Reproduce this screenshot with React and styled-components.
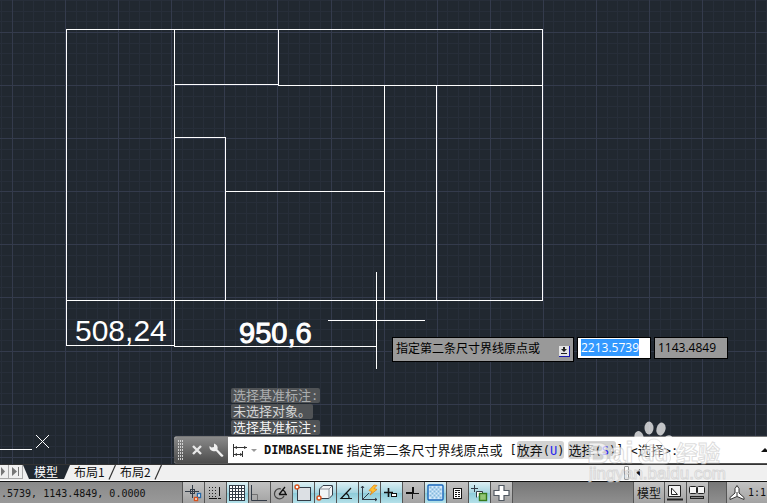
import React, { useEffect, useRef } from "react";
import styled, { createGlobalStyle, css } from "styled-components";

const cjk = `"Noto Sans CJK SC", sans-serif`;

const range = (n) => Array.from({ length: n }, (_, i) => i);

const GRID_STEP = 10.615;
const gridLines = (count, start) =>
  range(count).map((i) => ({ pos: Math.round(start + i * GRID_STEP) + 0.5, major: i % 5 === 0 }));

const columns = gridLines(250, -41);
const rows = gridLines(150, -21);

function Drawing() {
  return (
    <DrawingSvg aria-hidden="true">
      {[false, true].map((major) => (
        <g key={String(major)} stroke={major ? "#343b4c" : "#272e39"} shapeRendering="crispEdges">
          {columns.filter((l) => l.major === major).map((l) => (
            <line key={`c${l.pos}`} x1={l.pos} x2={l.pos} y1="0" y2="1600" />
          ))}
          {rows.filter((l) => l.major === major).map((l) => (
            <line key={`r${l.pos}`} y1={l.pos} y2={l.pos} x1="0" x2="2650" />
          ))}
        </g>
      ))}
      <g stroke="#fff" fill="none" shapeRendering="crispEdges">
        <path d="M66.5 345.5V29.5H542.5V300.5H66.5M174.5 29.5V346.5M278.5 29.5V85.5H542.5M174.5 84.5H278.5" />
        <path d="M174.5 137.5H225.5V300.5M225.5 191.5H384.5M384.5 85.5V300.5M436.5 85.5V300.5" />
        <path d="M66.5 345.5H174.5M174.5 346.5H376.5" />
        <path d="M376.5 272V369M328 320.5H425M0 449.5H32" />
      </g>
      <path d="M36 435L49 448M49 435L36 448" stroke="#fff" />
      <DimText x="75" y="341">508,24</DimText>
      <DimText x="239" y="343" $active>950,6</DimText>
    </DrawingSvg>
  );
}

function Watermark() {
  return (
    <WatermarkSvg viewBox="0 0 140 68" aria-hidden="true">
      <g fill="#fff" fillOpacity="0.72">
        <ellipse cx="53" cy="18" rx="4.5" ry="6" transform="rotate(-16 53 18)" />
        <ellipse cx="63" cy="9" rx="4.5" ry="6.5" />
        <ellipse cx="75" cy="10" rx="4.5" ry="6.5" transform="rotate(14 75 10)" />
        <ellipse cx="82" cy="22" rx="4.5" ry="6" transform="rotate(24 82 22)" />
        <path
          d="M68 20C61 20 60 27 56 31C51 36 52 45 59 45H78C86 45 86 36 81 31C76 27 75 20 68 20Z"
          fillOpacity="0.3"
          stroke="#ccc"
          strokeOpacity="0.5"
        />
      </g>
      <g fill="#fff" fillOpacity="0.7" stroke="#bbb" strokeOpacity="0.5">
        <MarkText x="1" y="44" $size={30} $bold>Bai</MarkText>
        <MarkText x="55" y="42" $size={22} $bold>du</MarkText>
        <MarkText x="90" y="42" $size={22} $bold>经验</MarkText>
        <MarkText x="3" y="60" $size={17}>jingyan.baidu.com</MarkText>
      </g>
    </WatermarkSvg>
  );
}

const orange = "#d9531e";

const icons = {
  infer: (
    <>
      <path d="M2 8.5H16M9.5 2V15" stroke="#333c47" />
      <rect x="7.5" y="6.5" width="4" height="4" stroke="#333c47" />
      <rect x="14.5" y="10.5" width="3" height="4" fill="#fff" stroke="#2869a8" strokeWidth="1.4" />
      <rect x="11.5" y="14.5" width="3" height="3" fill="#fff" stroke={orange} strokeWidth="1.4" />
    </>
  ),
  snap: (
    <>
      <path d="M4 4.5H13M4 7.5H13M4 10.5H13M4 13.5H13" stroke="#222" strokeDasharray="1 2" />
      <path d="M14.5 4V13M4 15.5H12M13 15.5H16" stroke="#111" />
    </>
  ),
  grid: (
    <>
      <rect x="2.5" y="2.5" width="15" height="15" fill="#fff" stroke="#333c47" />
      <path d="M5.5 2V18M8.5 2V18M11.5 2V18M14.5 2V18M2 5.5H18M2 8.5H18M2 11.5H18M2 14.5H18" stroke="#333c47" />
    </>
  ),
  ortho: (
    <>
      <path d="M2.5 2V17.5H18" stroke="#333c47" />
      <path d="M3 11.5H8.5V17" stroke="#727272" />
    </>
  ),
  polar: (
    <>
      <path d="M10 6A5 5 0 1 0 13 13" stroke="#444" strokeWidth="1.3" />
      <path d="M8 11.5H16M8 11.5L14 4M11.500 7Q14.500 8 14.500 11" stroke="#111" strokeWidth="1.3" />
    </>
  ),
  osnap: (
    <>
      <rect x="4.5" y="4.5" width="13" height="13" fill="#dce0e4" stroke="#333c47" />
      <circle cx="4" cy="4" r="2" fill="#fff" stroke={orange} strokeWidth="1.4" />
    </>
  ),
  osnap3d: (
    <>
      <path d="M4.5 6L8 2.5H17.5V12L14 15.5H4.5Z" fill="#f3f4f5" stroke="#333c47" />
      <path d="M4.5 6H14V15.5M14 6L17.5 2.5" stroke="#8b939b" />
      <circle cx="4" cy="15" r="2" fill="#fff" stroke={orange} strokeWidth="1.4" />
    </>
  ),
  otrack: <path d="M14 5L4 15.5H15M9 10Q12 12 12 15" stroke="#111" strokeWidth="1.2" />,
  ducs: (
    <>
      <path d="M3.5 17V3M2 5L3.5 3L5 5M4 16.5H18M16 15L18 16.5L16 18M4 16L10 10" stroke="#333c47" />
      <path d="M15 2L10 7.5L13 8.5L11 12L18 6.5L15 5.5L18 2.5Z" fill="#ffc22e" stroke="#e27a0c" strokeWidth="0.7" />
    </>
  ),
  dyn: (
    <>
      <path d="M3 9.5H12M7.5 5V14" stroke="#111" strokeWidth="1.6" />
      <rect x="10.5" y="10.5" width="5" height="3" fill="#fff" stroke="#111" />
    </>
  ),
  lwt: (
    <>
      <path d="M3 10H10M10 4V10" stroke="#111" strokeWidth="2" />
      <path d="M10 10.5H16M9.5 10V16" stroke="#111" />
    </>
  ),
  tpy: (
    <>
      <rect x="3" y="2" width="15" height="15" rx="1" fill="#d5eafb" stroke="#1765ba" strokeWidth="1.4" />
      {range(36).filter((i) => (i + Math.floor(i / 6)) % 2 === 0).map((i) => (
        <rect key={i} x={4.5 + (i % 6) * 2} y={3.5 + Math.floor(i / 6) * 2} width="2" height="2" fill="#84b9de" />
      ))}
    </>
  ),
  qp: (
    <>
      <rect x="6.5" y="5.5" width="8" height="10" fill="#fff" stroke="#111" />
      <path d="M8 7.5H13M8 9.5H10M8 11.5H10M8 13.5H10M11 9.5H13M11 11.5H13M11 13.5H13" stroke="#111" />
    </>
  ),
  sc: (
    <>
      <path d="M2 5.5H9M5.5 2V9" stroke="#333c47" />
      <path d="M7.5 14.5V8.5H13.5V10" fill="#fff" stroke="#333c47" />
      <rect x="10.5" y="10.5" width="7" height="7" fill="#92c574" stroke="#367b1c" strokeWidth="1.4" />
    </>
  ),
  plus: (
    <path d="M8 2.5H13V7.5H18V12.5H13V17.5H8V12.5H3V7.5H8Z" fill="#fff" stroke="#515962" strokeWidth="1.2" />
  ),
  layout: (
    <>
      <path d="M3.5 2.5H15.5V13.5H3.5Z" fill="#f1f1f1" stroke="#222" />
      <path d="M6.5 5V11.5H12.5Z" fill="#fff" stroke="#222" />
      <path d="M2 16.5H18" stroke="#222" strokeWidth="2" />
    </>
  ),
  quick: (
    <>
      <rect x="2.5" y="3.5" width="7" height="7" rx="1" fill="#f4f4f4" stroke="#222" />
      <rect x="10.5" y="3.5" width="7" height="7" rx="1" fill="#f4f4f4" stroke="#222" />
      <path d="M3 14.5H17" stroke="#222" strokeWidth="3" />
      <path d="M4 14.5H16" stroke="#888" />
    </>
  ),
  scale: (
    <path d="M10 2.5L12 5.5V10L17 14.5V16.5L10 13.5L3 16.5V14.5L8 10V5.5ZM10 9V13" fill="#fff" stroke="#333" />
  ),
};

const toggles = [
  ["infer", false, "推断约束"],
  ["snap", false, "捕捉模式"],
  ["grid", true, "栅格显示"],
  ["ortho", false, "正交模式"],
  ["polar", false, "极轴追踪"],
  ["osnap", true, "对象捕捉"],
  ["osnap3d", true, "三维对象捕捉"],
  ["otrack", true, "对象捕捉追踪"],
  ["ducs", true, "动态 UCS"],
  ["dyn", true, "动态输入"],
  ["lwt", false, "线宽"],
  ["tpy", true, "透明度"],
  ["qp", false, "快捷特性"],
  ["sc", true, "选择循环"],
  ["plus", false, "注释监视器"],
];

function Icon({ name }) {
  return (
    <svg width="21" height="20" fill="none" aria-hidden="true">
      {icons[name]}
    </svg>
  );
}

function DynamicInput() {
  const xRef = useRef(null);

  useEffect(() => {
    xRef.current.focus();
    xRef.current.select();
  }, []);

  return (
    <DynamicPrompt>
      <PromptTip>
        <span>指定第二条尺寸界线原点或</span>
        <OptionsButton aria-label="选项">
          <svg width="10" height="10" aria-hidden="true">
            <path d="M4 1H6V3H8L5 6L2 3H4ZM2 7H8V8H2Z" fill="#222" />
          </svg>
        </OptionsButton>
      </PromptTip>
      <CoordInput ref={xRef} aria-label="X" defaultValue="2213.5739" />
      <CoordInput aria-label="Y" defaultValue="1143.4849" $idle />
    </DynamicPrompt>
  );
}

function CommandLine() {
  return (
    <CommandDock>
      <History>
        <HistoryLine $fade={0.55}>选择基准标注<Mono>:</Mono></HistoryLine>
        <HistoryLine $fade={0.75}>未选择对象。</HistoryLine>
        <HistoryLine $fade={0.95}>选择基准标注<Mono>:</Mono></HistoryLine>
      </History>
      <CommandBar>
        <CommandHandle>
          <svg width="6" height="21" aria-hidden="true">
            {range(21).map((i) => (
              <rect key={i} x={(i % 3) * 2} y={Math.floor(i / 3) * 3} width="1" height="2" fill="#d0d0d0" />
            ))}
          </svg>
          <HandleButton aria-label="关闭">
            <svg width="10" height="10" aria-hidden="true">
              <path d="M1 1L9 9M9 1L1 9" stroke="#e8e8e8" strokeWidth="2.4" />
            </svg>
          </HandleButton>
          <HandleButton aria-label="自定义">
            <svg width="15" height="15" aria-hidden="true">
              <path
                d="M5 0.5L5 4L2.5 4.5L0.5 3Q0 7 3.5 8Q5.5 8.5 7 8L12 13.5Q14 14.5 14.5 12.5L8.500 6.5Q9.500 2 5 0.5Z"
                fill="#f0f0f0"
              />
            </svg>
          </HandleButton>
        </CommandHandle>
        <RecentButton aria-label="最近使用的命令">
          <svg width="25" height="17" fill="none" aria-hidden="true">
            <path d="M1.5 2V15M1 5.5H15M2 12.5H11M10.5 9V15" stroke="#333" />
            <path d="M2 5.5L5 4V7ZM15 5.5L12 4V7ZM2 12.5L5 11V14ZM11 12.5L8 11V14Z" fill="#333" />
            <path d="M19 7H25L22 10Z" fill="#999" />
          </svg>
        </RecentButton>
        <CommandName>DIMBASELINE</CommandName>
        <span>指定第二条尺寸界线原点或</span>
        <OptionGroup>
          <Mono>[</Mono>
          <Option>放弃<Mono>(<b>U</b>)</Mono></Option>
          <Option>选择<Mono>(<b>S</b>)</Mono></Option>
          <Mono>]</Mono>
        </OptionGroup>
        <span><Mono>&lt;</Mono>选择<Mono>&gt;:</Mono></span>
        <CommandInput aria-label="命令" />
        <HistoryToggle aria-label="历史记录">
          <svg width="6" height="4" aria-hidden="true">
            <path d="M0 4L4 0L8 4Z" fill="#111" />
          </svg>
        </HistoryToggle>
      </CommandBar>
    </CommandDock>
  );
}

function Slash() {
  return (
    <SlashSvg width="8" height="15" aria-hidden="true">
      <path d="M7.5 0L1 14.5" stroke="#333" strokeWidth="1.2" />
    </SlashSvg>
  );
}

function LayoutTabs() {
  return (
    <TabBar>
      <NavButton aria-label="下一个" $narrow>
        <svg width="6" height="9" aria-hidden="true"><path d="M0 0L4 4.5L0 9Z" fill="#777" /></svg>
      </NavButton>
      <NavButton aria-label="最后一个">
        <svg width="8" height="9" aria-hidden="true"><path d="M0 0L5 4.5L0 9ZM6 0H7V9H6Z" fill="#777" /></svg>
      </NavButton>
      <Tab $current>模型</Tab>
      <Tab>布局1<Slash /></Tab>
      <Tab>布局2<Slash /></Tab>
      <ScrollTrack>
        <Splitter />
        <svg width="5" height="7" aria-hidden="true"><path d="M4 0V7L0 3.5Z" fill="#111" /></svg>
      </ScrollTrack>
    </TabBar>
  );
}

function App() {
  return (
    <Screen>
      <GlobalStyle />
      <Workspace>
        <Drawing />
        <DynamicInput />
        <CommandLine />
      </Workspace>
      <LayoutTabs />
      <StatusBar>
        <Coordinates>.5739, 1143.4849, 0.0000</Coordinates>
        <ToggleGroup>
          {toggles.map(([name, on, label]) => (
            <StatusButton key={name} aria-label={label} aria-pressed={on} $on={on}>
              <Icon name={name} />
            </StatusButton>
          ))}
        </ToggleGroup>
        <StatusSpace />
        <StatusButton $wide>模型</StatusButton>
        <StatusButton aria-label="布局"><Icon name="layout" /></StatusButton>
        <StatusButton aria-label="快速查看"><Icon name="quick" /></StatusButton>
        <StatusGap />
        <ScaleButton><Icon name="scale" />1:1</ScaleButton>
      </StatusBar>
      <Watermark />
    </Screen>
  );
}

const GlobalStyle = createGlobalStyle`
  * {
    box-sizing: border-box;
  }

  body {
    margin: 0;
    overflow: hidden;
    font-family: ${cjk};
    font-size: 12px;
  }

  button,
  input {
    margin: 0;
    padding: 0;
    border: 0;
    border-radius: 0;
    background: none;
    color: inherit;
    font: inherit;
    outline: none;
  }

  svg {
    display: block;
    flex: none;
  }
`;

const Screen = styled.main`
  position: relative;
  display: flex;
  flex-direction: column;
  height: 100vh;
  overflow: hidden;
  background: #212830;
`;

const Workspace = styled.section`
  position: relative;
  flex: 1;
  min-height: 0;
  overflow: hidden;
`;

const DrawingSvg = styled.svg`
  width: 100%;
  height: 100%;
`;

const DimText = styled.text`
  fill: #fff;
  font-family: "Liberation Sans", Arial, sans-serif;
  font-size: 30px;
  ${({ $active }) => $active && css`
    font-size: 29px;
    stroke: #fff;
    stroke-width: 1px;
  `}
`;

const DynamicPrompt = styled.div`
  position: absolute;
  top: 337px;
  left: 392px;
  display: flex;
  align-items: flex-start;
  gap: 3px;
`;

const PromptTip = styled.div`
  display: flex;
  justify-content: space-between;
  width: 182px;
  height: 25px;
  padding: 0 3px;
  border: 1px solid #000;
  background: #999;
  color: #000;
  line-height: 20px;
`;

const OptionsButton = styled.button`
  align-self: flex-end;
  width: 11px;
  height: 11px;
  margin-bottom: 4px;
  border-right: 1px solid #1a1ab0;
  border-bottom: 1px solid #1a1ab0;
  background: #e4e4e4;
`;

const CoordInput = styled.input`
  width: 74px;
  height: 22px;
  padding: 0 3px 2px;
  border: 1px solid #000;
  background: ${({ $idle }) => ($idle ? "#999" : "#fff")};
  color: #000;
  font-family: "Open Sans", sans-serif;
  font-size: 12px;
  line-height: 17px;

  &::selection {
    background: #3399ff;
    color: #fff;
  }
`;

const CommandDock = styled.div`
  position: absolute;
  right: 0;
  bottom: 0;
  left: 174px;
`;

const History = styled.div`
  display: flex;
  flex-direction: column;
  align-items: flex-start;
  gap: 1px;
  padding: 0 0 1px 57px;
`;

const HistoryLine = styled.div`
  height: 15px;
  padding: 0 2px;
  border-radius: 2px;
  background: #505356;
  color: rgba(255, 255, 255, ${({ $fade }) => $fade});
  font-size: 13px;
  line-height: 14px;
`;

const CommandBar = styled.div`
  display: flex;
  align-items: center;
  height: 28px;
  border-top: 1px solid #777;
  border-bottom: 1px solid #555;
  border-radius: 3px 0 0 3px;
  background: #fff;
  color: #111;
  font-size: 13px;
  line-height: 18px;
  white-space: nowrap;
  overflow: hidden;
`;

const CommandHandle = styled.div`
  display: flex;
  align-items: center;
  justify-content: space-between;
  align-self: stretch;
  width: 54px;
  padding: 0 4px;
  background: linear-gradient(#8a8a8a, #4c4c4c);
`;

const HandleButton = styled.button`
  flex: none;
`;

const RecentButton = styled.button`
  margin: 0 7px 0 4px;
`;

const CommandName = styled.b`
  margin-right: 3px;
  font-family: "DejaVu Sans Mono", monospace;
  font-size: 12px;
`;

const Mono = styled.span`
  font-family: "DejaVu Sans Mono", monospace;
  font-size: 12px;

  b {
    color: #2222ee;
    font-weight: normal;
  }
`;

const OptionGroup = styled.span`
  display: flex;
  align-items: center;
  margin: 0 7px;
`;

const Option = styled.button`
  height: 18px;
  margin-right: 4px;
  border-radius: 3px;
  background: #d2d2d2;

  & + & {
    margin-right: 0;
  }
`;

const CommandInput = styled.input`
  flex: 1;
  min-width: 0;
`;

const HistoryToggle = styled.button`
  flex: none;
`;

const TabBar = styled.nav`
  display: flex;
  height: 17px;
  border-top: 1px solid #333;
  border-bottom: 1px solid #fff;
  background: #f0f0f0;
`;

const NavButton = styled.button`
  display: grid;
  place-items: center;
  width: ${({ $narrow }) => ($narrow ? "9px" : "14px")};
  height: 14px;
  border-right: 1px solid #aaa;
  border-bottom: 1px solid #aaa;
`;

const Tab = styled.button`
  position: relative;
  width: 46px;
  height: 14px;
  padding-left: 4px;
  color: #111;
  font-size: 12px;
  line-height: 14px;
  text-align: left;
  white-space: nowrap;

  ${({ $current }) => $current && css`
    width: 47px;
    padding-left: 11px;
    background: #212830;
    clip-path: polygon(0 0, 100% 0, 41px 100%, 6px 100%);
    color: #fff;
  `}
`;

const SlashSvg = styled.svg`
  position: absolute;
  top: 0;
  right: 0;
`;

const ScrollTrack = styled.div`
  display: flex;
  flex: 1;
  align-items: center;
  justify-content: flex-end;
  gap: 7px;
  padding-right: 126px;
`;

const Splitter = styled.div`
  width: 5px;
  height: 14px;
  border: 1px solid #999;
  border-radius: 1px;
  background: #fafafa;
`;

const StatusBar = styled.footer`
  display: flex;
  height: 22px;
  border-top: 1px solid #111;
  background: linear-gradient(#777, #8f8f8f);
  color: #111;
`;

const Coordinates = styled.div`
  width: 182px;
  padding-left: 1px;
  background: linear-gradient(#8a8a8a, #999);
  font-family: "DejaVu Sans Mono", monospace;
  font-size: 10px;
  line-height: 23px;
  white-space: nowrap;
`;

const ToggleGroup = styled.div`
  display: flex;
`;

const StatusButton = styled.button`
  width: ${({ $wide }) => ($wide ? "31px" : "22px")};
  border-left: 1px solid #555;
  background: ${({ $on }) =>
    $on ? "linear-gradient(#dceff3, #a7d6e1 50%, #8ccbd9 51%, #b4e0e8)" : "linear-gradient(#c2c2c2, #a3a3a3)"};
  font-size: 12px;
  white-space: nowrap;
`;

const StatusSpace = styled.div`
  flex: 1;
  border-left: 1px solid #555;
`;

const StatusGap = styled.div`
  width: 18px;
  border-left: 1px solid #555;
`;

const ScaleButton = styled.button`
  display: flex;
  align-items: center;
  width: 41px;
  border-left: 1px solid #555;
  background: linear-gradient(#c2c2c2, #a3a3a3);
  font-family: "DejaVu Sans Mono", monospace;
  font-size: 10px;
  white-space: nowrap;
`;

const WatermarkSvg = styled.svg`
  position: absolute;
  right: 41px;
  bottom: 16px;
  width: 140px;
  height: 68px;
  pointer-events: none;
`;

const MarkText = styled.text`
  font-family: "Liberation Sans", ${cjk};
  font-size: ${({ $size }) => $size}px;
  font-weight: ${({ $bold }) => ($bold ? "bold" : "normal")};
  stroke-width: 1px;
`;

export default App;
